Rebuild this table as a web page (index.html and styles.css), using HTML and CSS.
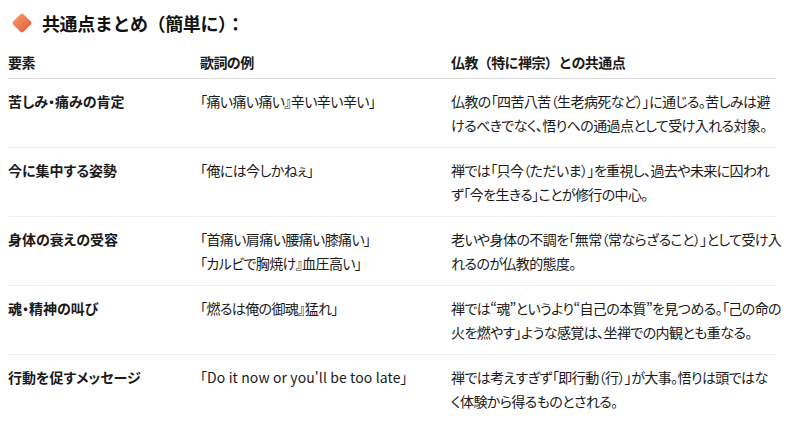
FILE: index.html
```html
<!DOCTYPE html>
<html lang="ja">
<head>
<meta charset="utf-8">
<link rel="stylesheet" href="styles.css">
</head>
<body>
<div class="page">
  <h3 class="title">
    <svg class="diamond" width="22" height="22" viewBox="0 0 22 22" aria-hidden="true">
      <defs>
        <linearGradient id="dg" x1="0" y1="0" x2="1" y2="1">
          <stop offset="0" stop-color="#f9a06a"/>
          <stop offset="1" stop-color="#e2553a"/>
        </linearGradient>
      </defs>
      <path d="M11 1.5 Q11.8 1.5 12.5 2.2 L19.8 9.5 Q20.5 10.2 20.5 11 Q20.5 11.8 19.8 12.5 L12.5 19.8 Q11.8 20.5 11 20.5 Q10.2 20.5 9.5 19.8 L2.2 12.5 Q1.5 11.8 1.5 11 Q1.5 10.2 2.2 9.5 L9.5 2.2 Q10.2 1.5 11 1.5 Z" fill="url(#dg)"/>
    </svg>
    <span>共通点まとめ（簡単に）：</span>
  </h3>
  <table class="summary">
    <colgroup>
      <col class="c1"><col class="c2"><col class="c3">
    </colgroup>
    <thead>
      <tr><th>要素</th><th>歌詞の例</th><th class="wide">仏教（特に禅宗）との共通点</th></tr>
    </thead>
    <tbody>
      <tr>
        <td class="key">苦しみ・痛みの肯定</td>
        <td class="lyric">「痛い痛い痛い』辛い辛い辛い」</td>
        <td class="note">仏教の「四苦八苦（生老病死など）」に通じる。苦しみは避<br>けるべきでなく、悟りへの通過点として受け入れる対象。</td>
      </tr>
      <tr>
        <td class="key">今に集中する姿勢</td>
        <td class="lyric">「俺には今しかねぇ」</td>
        <td class="note">禅では「只今（ただいま）」を重視し、過去や未来に囚われ<br>ず「今を生きる」ことが修行の中心。</td>
      </tr>
      <tr>
        <td class="key">身体の衰えの受容</td>
        <td class="lyric">「首痛い肩痛い腰痛い膝痛い」<br>「カルビで胸焼け』血圧高い」</td>
        <td class="note">老いや身体の不調を「無常（常ならざること）」として受け入<br>れるのが仏教的態度。</td>
      </tr>
      <tr>
        <td class="key">魂・精神の叫び</td>
        <td class="lyric">「燃るは俺の御魂』猛れ」</td>
        <td class="note">禅では“魂”というより“自己の本質”を見つめる。「己の命の<br>火を燃やす」ような感覚は、坐禅での内観とも重なる。</td>
      </tr>
      <tr>
        <td class="key">行動を促すメッセージ</td>
        <td class="lyric latin">「Do it now or you'll be too late」</td>
        <td class="note">禅では考えすぎず「即行動（行）」が大事。悟りは頭ではな<br>く体験から得るものとされる。</td>
      </tr>
    </tbody>
  </table>
</div>
</body>
</html>
```
FILE: styles.css
```css
html, body {
  margin: 0;
  padding: 0;
  background: #ffffff;
}
.page {
  padding: 9px 8px 0 8px;
  font-family: "Noto Sans CJK JP", "Noto Sans", sans-serif;
  color: #1a1a1a;
}
.title {
  display: flex;
  align-items: center;
  gap: 9px;
  margin: 0 0 9px 0;
  padding-left: 3px;
  font-size: 18px;
  line-height: 28px;
  font-weight: 700;
  color: #111;
  letter-spacing: -0.4px;
}
.diamond {
  flex: none;
}
.summary {
  width: 768px;
  border-collapse: collapse;
  table-layout: fixed;
  font-size: 14px;
  line-height: 24px;
}
.c1 { width: 192px; }
.c2 { width: 251px; }
.c3 { width: 325px; }
.summary th {
  text-align: left;
  font-weight: 700;
  padding: 4px 0 4px 0;
  border-bottom: 1px solid #dcdcdc;
  vertical-align: top;
  letter-spacing: -0.6px;
}
.summary td {
  padding: 10px 0 10px 0;
  vertical-align: top;
  border-bottom: 1px solid #efefef;
}
.summary tbody tr:last-child td {
  border-bottom: none;
}
.summary td.key {
  font-weight: 700;
  font-feature-settings: "palt";
}
.summary td.lyric {
  font-feature-settings: "palt";
  letter-spacing: -0.6px;
}
.summary td.lyric.latin {
  letter-spacing: 0.1px;
}
.summary td.note {
  font-feature-settings: "palt";
  letter-spacing: -0.6px;
  white-space: nowrap;
}
```
